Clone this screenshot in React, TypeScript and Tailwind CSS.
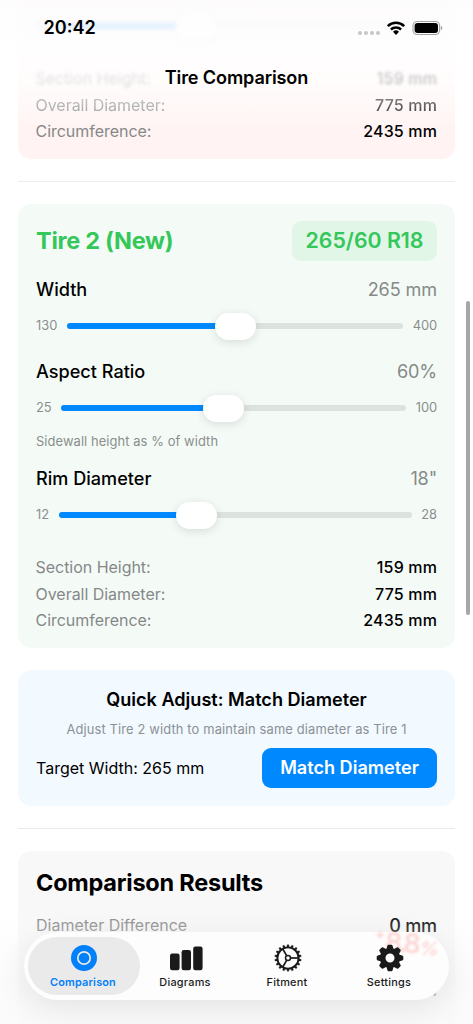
import React from "react";

type SliderProps = { min: string; max: string; fraction: number };

function Slider({ min, max, fraction }: SliderProps) {
  return (
    <div className="flex h-7 items-center gap-[9.5px] text-[12.9px] text-[#8a8e8c]">
      <span>{min}</span>
      <div className="relative h-[6.5px] flex-1 rounded-full bg-[#dce2de]">
        <div
          className="h-full rounded-full bg-[#0088ff]"
          style={{ width: `${fraction * 100}%` }}
        />
        <div
          className="absolute top-[-10px] h-[27px] w-[41px] rounded-full bg-white shadow-[0_2px_10px_rgba(0,0,0,0.12)]"
          style={{ left: `calc((100% - 41px) * ${fraction})` }}
        />
      </div>
      <span className="tracking-[-0.1px]">{max}</span>
    </div>
  );
}

function Setting({ label, value, className }: { label: string; value: string; className: string }) {
  return (
    <div className={`flex h-6 items-center justify-between text-[18.1px] ${className}`}>
      <span className="font-medium text-black">{label}</span>
      <span className="tracking-[-0.12px] text-[#868a88]">{value}</span>
    </div>
  );
}

function Spec({ label, value, className = "" }: { label: string; value: string; className?: string }) {
  return (
    <div className={`flex h-[26.5px] items-center justify-between text-[16px] ${className}`}>
      <span className="-ml-[0.5px] tracking-[-0.03px] text-[#868888]">{label}</span>
      <span className="font-medium tracking-[0.15px] text-black">{value}</span>
    </div>
  );
}

function CirclesIcon() {
  return (
    <svg width="28" height="28" viewBox="-14 -14 28 28">
      <circle r="13" fill="#0080fb" />
      <circle r="6.2" fill="none" stroke="#eaeaea" strokeWidth="1.7" />
    </svg>
  );
}

function BarsIcon() {
  return (
    <svg width="34" height="28" viewBox="-17 -14 34 28" fill="#1a1a1a">
      <rect x="-16" y="-4.4" width="9.6" height="16.6" rx="2.2" />
      <rect x="-4.4" y="-8" width="9.4" height="20.2" rx="2.2" />
      <rect x="7.2" y="-11.5" width="9.4" height="23.7" rx="2.2" />
    </svg>
  );
}

function CogWheelIcon() {
  return (
    <svg width="28" height="28" viewBox="-14 -14 28 28" fill="none" stroke="#1a1a1a">
      <circle r="10.6" strokeWidth="1.9" />
      {Array.from({ length: 18 }, (_, i) => (
        <path key={i} d="M-1.1 -11L-0.8 -13.3H0.8L1.1 -11Z" fill="#1a1a1a" strokeWidth="0.3" transform={`rotate(${i * 20})`} />
      ))}
      <circle r="2.5" strokeWidth="1.5" />
      {[0, 120, 240].map((a) => (
        <path key={a} d="M2.8 0H10.4" strokeWidth="1.7" transform={`rotate(${a})`} />
      ))}
    </svg>
  );
}

function GearIcon() {
  return (
    <svg width="28" height="28" viewBox="-14 -14 28 28">
      <circle r="7.3" fill="none" stroke="#1a1a1a" strokeWidth="5.6" />
      {Array.from({ length: 8 }, (_, i) => (
        <path
          key={i}
          d="M-3.6 -8.6L-2.6 -12.2Q-2.3 -13.3 -1.3 -13.3H1.3Q2.3 -13.3 2.6 -12.2L3.6 -8.6Z"
          fill="#1a1a1a"
          transform={`rotate(${i * 45})`}
        />
      ))}
    </svg>
  );
}

function StatusIcons() {
  return (
    <svg width="86" height="18" viewBox="357 18 86 18">
      {[360, 366, 372, 378].map((x) => (
        <circle key={x} cx={x} cy="32" r="2" fill="#c6c6c6" />
      ))}
      <g fill="none" stroke="#000" strokeWidth="2.5">
        <path d="M387.8 25.2A11.7 11.7 0 0 1 404.2 25.2" />
        <path d="M390.9 28.5A7.3 7.3 0 0 1 401.1 28.5" />
      </g>
      <path d="M393 30.8A4.3 4.3 0 0 1 399 30.8L396 33.9Z" />
      <rect x="413" y="20.5" width="26.6" height="13" rx="4.2" fill="none" stroke="#a2a2a2" strokeWidth="1.1" />
      <rect x="414.6" y="22" width="23.4" height="10" rx="2.9" />
      <path d="M440.8 24.8Q442.4 25.5 442.4 27T440.8 29.2Z" fill="#a2a2a2" />
    </svg>
  );
}

function Tab({ label, active = false, children }: { label: string; active?: boolean; children: React.ReactNode }) {
  return (
    <div
      className={`relative flex flex-col items-center rounded-full pt-[7px] ${
        active ? "-mx-[5px] bg-[#eaeaea] text-[#0080fb]" : "text-[#1a1a1a]"
      }`}
    >
      {children}
      <span
        className={`mt-[2px] text-[10.9px] leading-4 ${
          active ? "-ml-px font-semibold tracking-[0.16px]" : "-ml-px font-medium tracking-[0.24px]"
        }`}
      >
        {label}
      </span>
    </div>
  );
}

export default function App() {
  return (
    <div className="relative h-[1024px] w-[473px] overflow-hidden bg-white font-[Inter,sans-serif] text-black">
      <main className="flex flex-col px-[18px]">
        <section className="h-[158.5px] rounded-b-[13px] bg-[#fff4f3] px-[18px] pt-3">
          <div className="blur-[2px]">
            <Slider min="12" max="28" fraction={0.375} />
          </div>
          <div className="pt-[25px]">
            <Spec label="Section Height:" value="159 mm" className="blur-[1.6px]" />
            <Spec label="Overall Diameter:" value="775 mm" className="blur-[0.6px]" />
            <Spec label="Circumference:" value="2435 mm" />
          </div>
        </section>

        <div className="mt-[22px] h-[1.5px] bg-[#eeeeee]" />

        <section className="mt-[21.5px] h-[444px] rounded-[13px] bg-[#f4fbf7] px-[18px] pt-[17.5px]">
          <div className="flex h-[39.5px] items-center justify-between text-[#34c759]">
            <h2 className="text-[23.5px] font-bold tracking-[-0.28px]">Tire 2 (New)</h2>
            <span className="flex h-full w-[145px] items-center justify-center rounded-[9px] bg-[#e1f6e7] text-[21.3px] font-semibold">
              265/60 R18
            </span>
          </div>
          <Setting label="Width" value="265 mm" className="mt-[16.6px] mb-[11px]" />
          <Slider min="130" max="400" fraction={0.5} />
          <Setting label="Aspect Ratio" value="60%" className="mt-[19px] mb-[11px]" />
          <Slider min="25" max="100" fraction={0.4667} />
          <p className="mt-[11px] text-[12.9px] leading-[18px] tracking-[0.09px] text-[#8a8e8c]">
            Sidewall height as % of width
          </p>
          <Setting label="Rim Diameter" value={'18"'} className="mt-[15px] mb-[11px]" />
          <Slider min="12" max="28" fraction={0.375} />
          <div className="pt-[24.8px]">
            <Spec label="Section Height:" value="159 mm" />
            <Spec label="Overall Diameter:" value="775 mm" />
            <Spec label="Circumference:" value="2435 mm" />
          </div>
        </section>

        <section className="mt-[22.5px] h-[135.5px] rounded-[13px] bg-[#f2f9ff] px-[18px] pt-[17px] text-center">
          <h3 className="text-[18.1px] leading-6 font-semibold">Quick Adjust: Match Diameter</h3>
          <p className="mt-[10px] text-[12.9px] leading-[18px] tracking-[0.14px] text-[#8c9196]">
            Adjust Tire 2 width to maintain same diameter as Tire 1
          </p>
          <div className="mt-[9px] flex items-center justify-between">
            <span className="text-[16px]">Target Width: 265 mm</span>
            <button className="h-10 w-[175px] rounded-[9px] bg-[#0088ff] text-[18.1px] font-semibold text-white">
              Match Diameter
            </button>
          </div>
        </section>

        <div className="mt-[22px] h-[1.5px] bg-[#e9e9e9]" />

        <section className="mt-[21.5px] h-[240px] rounded-[13px] bg-[#f8f8f8] px-[18px] pt-[17px]">
          <h2 className="text-[23.5px] leading-[30px] font-bold tracking-[-0.23px]">Comparison Results</h2>
          <div className="mt-3 flex h-8 items-center justify-between">
            <span className="-mt-px text-[16px] text-[#868686]">Diameter Difference</span>
            <span className="text-[18.1px] font-medium tracking-[-0.2px]">0 mm</span>
          </div>
          <div className="mt-8 flex h-8 items-center justify-end text-[18.1px] font-medium">0 mm</div>
        </section>
      </main>

      <header className="absolute inset-x-0 top-0 h-[130px] bg-[linear-gradient(to_bottom,rgba(253,253,253,0.88)_0px,rgba(255,255,255,0.89)_55px,rgba(255,255,255,0.76)_80px,rgba(255,255,255,0.4)_105px,rgba(255,255,255,0)_128px)]">
        <div className="flex h-[55px] items-center justify-between pr-[30px] pl-[43.5px]">
          <span className="text-[18.1px] font-semibold">20:42</span>
          <StatusIcons />
        </div>
        <h1 className="mt-[9.5px] text-center text-[18.1px] leading-6 font-semibold tracking-[-0.13px]">
          Tire Comparison
        </h1>
      </header>

      <div className="absolute top-[301px] right-[3.5px] h-[314px] w-[3.5px] rounded-full bg-[#a6a6a6]" />

      <div className="absolute inset-x-0 bottom-0 h-[115px] bg-[linear-gradient(to_bottom,rgba(250,250,250,0)_0px,rgba(250,250,250,0.3)_24px,rgba(250,250,250,0.75)_80px,rgba(250,250,250,0.9)_115px)]" />

      <nav className="absolute top-[932px] left-6 grid h-[68px] w-[425px] grid-cols-4 overflow-visible rounded-full bg-[#fdfdfd] px-[8.5px] py-[5px] shadow-[0_8px_32px_rgba(0,0,0,0.09)]">
        <span className="absolute top-0 right-[10px] flex origin-right rotate-[4deg] items-start leading-7 font-semibold text-[#ff3b30]/20 blur-[0.8px]">
          <span className="text-[16px] leading-3">+</span>
          <span className="text-[27px] tracking-[-3px]">8.8</span>
          <span className="mt-1 ml-[2px] text-[19px] italic">%</span>
        </span>
        <Tab label="Comparison" active>
          <CirclesIcon />
        </Tab>
        <Tab label="Diagrams">
          <BarsIcon />
        </Tab>
        <Tab label="Fitment">
          <CogWheelIcon />
        </Tab>
        <Tab label="Settings">
          <GearIcon />
        </Tab>
      </nav>
    </div>
  );
}
